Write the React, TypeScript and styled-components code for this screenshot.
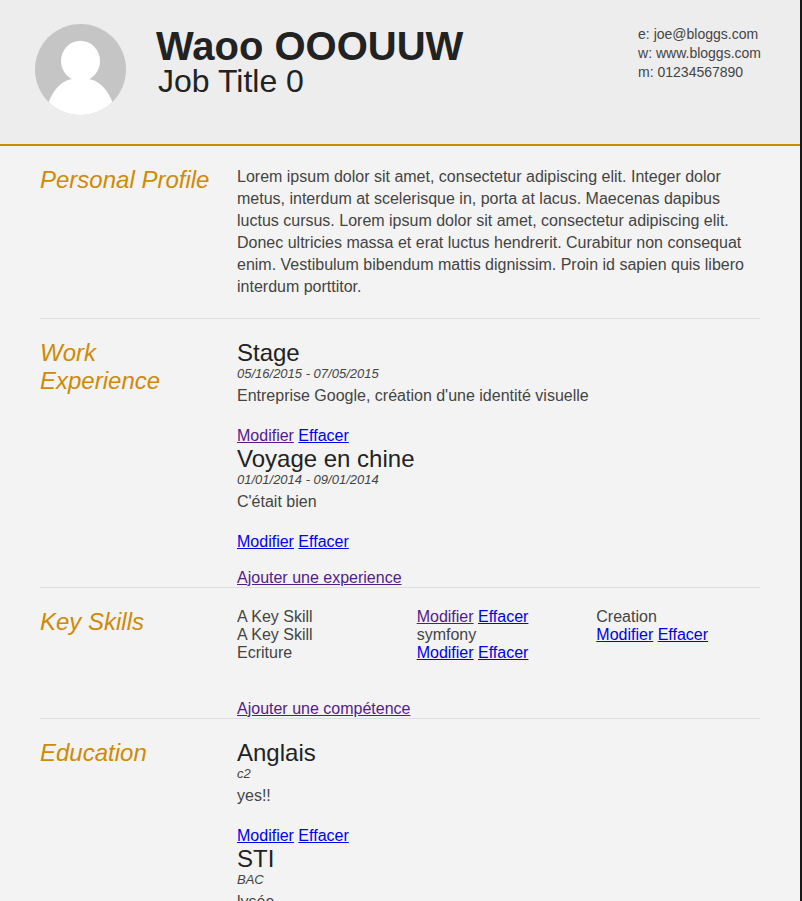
import React from "react";
import styled, { createGlobalStyle } from "styled-components";

const GlobalStyle = createGlobalStyle`
  * { box-sizing: border-box; margin: 0; padding: 0; }
  html { background: #181818; }
  body {
    color: #222;
    font-family: "Liberation Sans", Arial, Helvetica, sans-serif;
    font-size: 16px;
    line-height: 18px;
  }
`;

const Page = styled.div`
  min-height: 100vh;
  margin-right: 2px;
  background: #f3f3f3;
`;

const Header = styled.header`
  display: flex;
  align-items: flex-start;
  padding: 24px 39px 29px 35px;
  background: #ededed;
  border-bottom: 2px solid #cf8a05;
`;

const AvatarImage = styled.svg`
  flex: none;
  width: 91px;
  height: 91px;
`;

const Identity = styled.div`
  flex: 1;
  padding: 2px 0 0 30px;
`;

const Name = styled.h1`
  font-size: 40px;
  line-height: 40px;
  font-weight: 700;
`;

const JobTitle = styled.h2`
  padding-left: 2px;
  font-size: 32px;
  line-height: 30px;
  font-weight: 400;
`;

const Contact = styled.ul`
  padding-top: 1px;
  list-style: none;
  color: #444;
  font-size: 14px;
  line-height: 19px;
`;

const Main = styled.main`
  padding: 0 40px;
`;

const Section = styled.section<{ $padded?: boolean }>`
  display: grid;
  grid-template-columns: 25% 1fr;
  padding: 20px 0 ${(p) => (p.$padded ? 20 : 0)}px;
  border-bottom: 1px solid #dedede;
`;

const SectionTitle = styled.h2`
  color: #cf8a05;
  font-size: 24px;
  line-height: 28px;
  font-style: italic;
  font-weight: 400;
`;

const Content = styled.div`
  padding-left: 17px;
  color: #444;
`;

const Text = styled.p`
  line-height: 22px;
`;

const EntryTitle = styled.h3`
  color: #222;
  font-size: 24px;
  line-height: 28px;
  font-weight: 400;
`;

const EntryDetail = styled.p`
  margin-bottom: 4px;
  font-size: 13px;
  line-height: 14px;
  font-style: italic;
`;

const EntryActions = styled.p`
  margin-top: 20px;
`;

const AddAction = styled.p<{ $gap: number }>`
  margin-top: ${(p) => p.$gap}px;
`;

const Link = styled.a<{ $seen?: boolean }>`
  color: ${(p) => (p.$seen ? "#551a8b" : "#0000ee")};
`;

const SkillList = styled.ul`
  columns: 3;
  column-gap: 16px;
  list-style: none;
`;

function Avatar() {
  return (
    <AvatarImage viewBox="0 0 91 91" role="img" aria-label="Portrait">
      <defs>
        <clipPath id="portrait">
          <circle cx="45.5" cy="45.5" r="45.5" />
        </clipPath>
      </defs>
      <g clipPath="url(#portrait)">
        <rect width="91" height="91" fill="#c5c5c5" />
        <ellipse cx="45.5" cy="37" rx="19.5" ry="20.3" fill="#fff" />
        <path
          d="M13 80C17 68 25 58 35.500 55.300H55.500C66 58 74 68 78 80V91H13Z"
          fill="#fff"
        />
      </g>
    </AvatarImage>
  );
}

function Actions({ seen }: { seen?: boolean }) {
  return (
    <>
      <Link href="#modifier" $seen={seen}>Modifier</Link>{" "}
      <Link href="#effacer">Effacer</Link>
    </>
  );
}

interface EntryProps {
  title: string;
  detail: string;
  text: string;
  actions?: boolean;
  seen?: boolean;
}

function Entry({ title, detail, text, actions = true, seen }: EntryProps) {
  return (
    <article>
      <EntryTitle>{title}</EntryTitle>
      <EntryDetail>{detail}</EntryDetail>
      <Text>{text}</Text>
      {actions && (
        <EntryActions>
          <Actions seen={seen} />
        </EntryActions>
      )}
    </article>
  );
}

export default function App() {
  return (
    <>
      <GlobalStyle />
      <Page>
        <Header>
          <Avatar />
          <Identity>
            <Name>Waoo OOOUUW</Name>
            <JobTitle>Job Title 0</JobTitle>
          </Identity>
          <Contact>
            <li>e: joe@bloggs.com</li>
            <li>w: www.bloggs.com</li>
            <li>m: 01234567890</li>
          </Contact>
        </Header>
        <Main>
          <Section $padded>
            <SectionTitle>Personal Profile</SectionTitle>
            <Content>
              <Text>
                Lorem ipsum dolor sit amet, consectetur adipiscing elit. Integer
                dolor metus, interdum at scelerisque in, porta at lacus. Maecenas
                dapibus luctus cursus. Lorem ipsum dolor sit amet, consectetur
                adipiscing elit. Donec ultricies massa et erat luctus hendrerit.
                Curabitur non consequat enim. Vestibulum bibendum mattis
                dignissim. Proin id sapien quis libero interdum porttitor.
              </Text>
            </Content>
          </Section>

          <Section>
            <SectionTitle>Work Experience</SectionTitle>
            <Content>
              <Entry
                title="Stage"
                detail="05/16/2015 - 07/05/2015"
                text="Entreprise Google, création d'une identité visuelle"
                seen
              />
              <Entry
                title="Voyage en chine"
                detail="01/01/2014 - 09/01/2014"
                text="C'était bien"
              />
              <AddAction $gap={18}>
                <Link href="#experience" $seen>Ajouter une experience</Link>
              </AddAction>
            </Content>
          </Section>

          <Section>
            <SectionTitle>Key Skills</SectionTitle>
            <Content>
              <SkillList>
                <li>A Key Skill</li>
                <li>A Key Skill</li>
                <li>Ecriture</li>
                <li><Actions seen /></li>
                <li>symfony</li>
                <li><Actions /></li>
                <li>Creation</li>
                <li><Actions /></li>
              </SkillList>
              <AddAction $gap={38}>
                <Link href="#competence" $seen>Ajouter une compétence</Link>
              </AddAction>
            </Content>
          </Section>

          <Section $padded>
            <SectionTitle>Education</SectionTitle>
            <Content>
              <Entry title="Anglais" detail="c2" text="yes!!" />
              <Entry title="STI" detail="BAC" text="lysée" actions={false} />
            </Content>
          </Section>
        </Main>
      </Page>
    </>
  );
}
